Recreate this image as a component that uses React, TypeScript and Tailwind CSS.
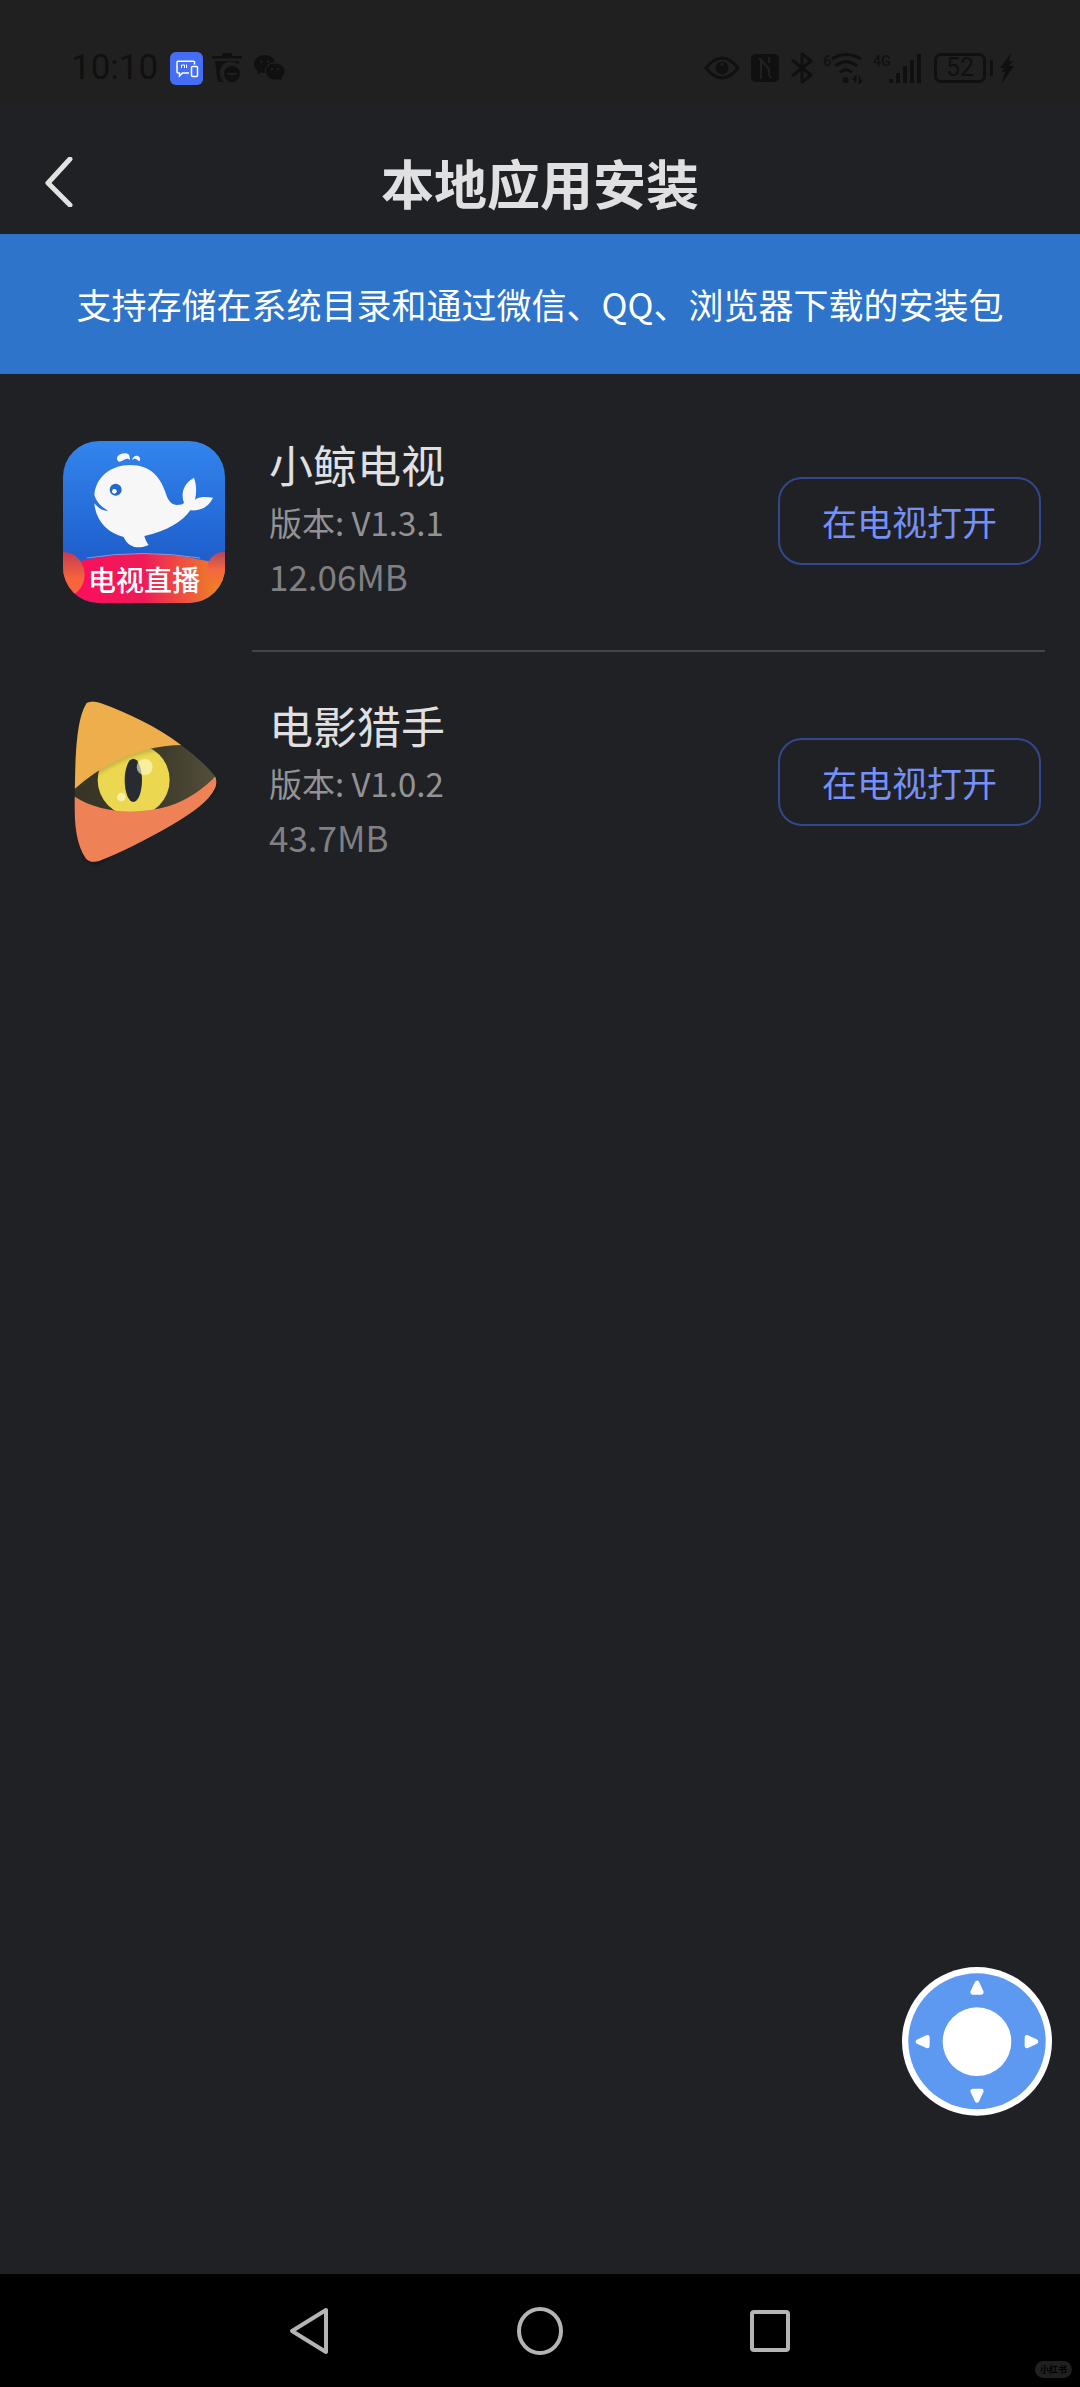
import React from "react";

function WhaleIcon() {
  return (
    <div className="relative size-[162px] overflow-hidden rounded-[36px]">
      <svg viewBox="39 33 486 486" className="size-full" aria-hidden="true">
        <defs>
          <linearGradient id="sea" x1="0" y1="0" x2="0" y2="1">
            <stop offset="0" stopColor="#3385ee" />
            <stop offset="0.7" stopColor="#1f60cd" />
          </linearGradient>
          <linearGradient id="ribbon" x1="0" y1="0" x2="1" y2="0">
            <stop offset="0.1" stopColor="#fb0f5c" />
            <stop offset="0.5" stopColor="#ee1b58" />
            <stop offset="1" stopColor="#ef8a22" />
          </linearGradient>
          <linearGradient id="leftDot" x1="0" y1="0" x2="0" y2="1">
            <stop offset="0" stopColor="#c73a55" />
            <stop offset="0.6" stopColor="#f8653a" />
          </linearGradient>
          <linearGradient id="rightDot" x1="0" y1="0" x2="0" y2="1">
            <stop offset="0" stopColor="#b04660" />
            <stop offset="0.5" stopColor="#f4673f" />
            <stop offset="1" stopColor="#f07a2c" />
          </linearGradient>
        </defs>
        <rect x="39" y="33" width="486" height="486" fill="url(#sea)" />
        <path
          fill="#f7f7f8"
          d="M133 195C137 142 182 105 240 105C303 105 331 143 345 184C353 208 360 223 380 225C392 225 399 223 402 219C391 190 401 160 432 143C440 167 440 187 435 209C452 198 472 201 489 203C475 232 449 244 421 241C399 274 349 304 283 318C286 329 290 338 296 345C262 360 233 350 221 321C173 309 137 272 133 220C146 235 158 243 175 242C159 234 140 219 133 195Z"
        />
        <circle cx="197" cy="179" r="18" fill="#2469c9" />
        <circle cx="193" cy="184" r="7" fill="#fff" />
        <path fill="#f7f7f8" d="M202 91C197 76 214 67 229 70C240 73 239 82 240 91C229 77 215 98 207 95ZM245 91C249 77 261 73 268 81C272 87 271 93 267 94C259 85 253 84 245 91Z" />
        <path d="M39 407Q280 335 525 407V519H39Z" fill="url(#ribbon)" />
        <path d="M110 384Q280 357 450 384" fill="none" stroke="#b9b4dc" strokeWidth="2" />
        <ellipse cx="40" cy="434" rx="64" ry="68" fill="url(#leftDot)" />
        <circle cx="524" cy="418" r="53" fill="url(#rightDot)" />
      </svg>
      <span className="absolute inset-x-0 bottom-1 text-center text-[28px] leading-[40px] font-medium text-white">电视直播</span>
    </div>
  );
}

function EyeIcon() {
  return (
    <svg viewBox="9 20 486 510" className="h-[170px] w-[162px]" aria-hidden="true">
      <defs>
        <clipPath id="play">
          <path d="M80 38Q96 29 121 38C208 69 292 111 362 163Q423 207 464 256Q474 270 465 294C446 333 400 366 334 405C252 452 180 488 117 512Q91 519 78 505C38 448 43 354 45 270C47 174 52 82 80 38Z" />
        </clipPath>
        <linearGradient id="lid" x1="0" y1="0" x2="1" y2="0">
          <stop offset="0" stopColor="#373426" />
          <stop offset="0.6" stopColor="#3f3c2c" />
          <stop offset="1" stopColor="#57523d" />
        </linearGradient>
        <filter id="soft" x="-20%" y="-20%" width="140%" height="140%">
          <feGaussianBlur stdDeviation="7" />
        </filter>
      </defs>
      <path fill="#08090b" opacity="0.55" filter="url(#soft)" d="M110 60L465 270L465 300L110 522L70 500Z" />
      <g clipPath="url(#play)">
        <rect x="30" y="20" width="460" height="510" fill="url(#lid)" />
        <circle cx="221" cy="269" r="108" fill="#ecd850" />
        <ellipse cx="220" cy="270" rx="26" ry="65" fill="#272c31" />
        <circle cx="254" cy="230" r="24" fill="#fffbd2" opacity="0.62" />
        <circle cx="184" cy="320" r="13" fill="#fffbd2" opacity="0.7" />
        <path d="M30 310Q190 163 370 168" fill="none" stroke="#423e26" strokeWidth="10" opacity="0.35" filter="url(#soft)" />
        <path d="M20 10H380V164Q190 160 30 308Z" fill="#eeae4c" />
        <path d="M30 309C110 369 230 375 325 348Q414 318 480 243V540H30Z" fill="#ee8256" />
      </g>
    </svg>
  );
}

const apps = [
  { name: "小鲸电视", version: "V1.3.1", size: "12.06MB", icon: <WhaleIcon /> },
  { name: "电影猎手", version: "V1.0.2", size: "43.7MB", icon: <EyeIcon /> },
];

function StatusBar() {
  return (
    <div className="flex h-[106px] items-center justify-between bg-[#202020] pt-[34px] pr-[66px] pb-[4px] pl-[71px] text-[#101010]">
      <div className="flex items-center">
        <span className="w-[99px] font-[Roboto] text-[35px] leading-[40px]">10:10</span>
        <svg viewBox="0 0 33 33" className="size-[33px]" fill="none" stroke="#fff" strokeWidth="1.5" aria-hidden="true">
          <rect width="33" height="33" rx="6" fill="#456ef5" stroke="none" />
          <path d="M24.500 12.500V10Q24.500 9.200 23.500 9.200H8Q7 9.200 7 10.200V20Q7 21 8 21H9.500V24L12.500 21H19" />
          <path d="M11.500 16V13H14.500V16M16.500 12.500V16" strokeWidth="1" />
          <rect x="21.500" y="14.500" width="6" height="10" rx="1" />
        </svg>
        <svg viewBox="0 0 31 31" className="ml-[9px] h-[31px] w-[31px]" fill="#101010" aria-hidden="true">
          <path d="M0 3H10V1Q10 0 11 0H19Q20 0 20 1V3H30V5.500H0ZM3 8H27L26.500 11A10 10 0 0 0 12 29H8Q6 29 5.500 27Z" />
          <circle cx="20" cy="21" r="8" />
          <path d="M15.500 21H24.500" stroke="#202020" strokeWidth="2" />
        </svg>
        <svg viewBox="0 0 31 26" className="ml-[11px] h-[26px] w-[31px]" fill="#101010" aria-hidden="true">
          <path d="M11 0C5 0 0 4 0 9C0 12 2 15 4 16L3 19.500L7 17.500Q9 18 11 18C10 11 15 7 21 7C20 3 16 0 11 0Z" />
          <path d="M21 8.500C15.500 8.500 12 12 12 16.500C12 21 16 24.500 21 24.500Q23 24.500 25 24L28 25.500L27.500 22.500C29 21 30.500 19 30.500 16.500C30.500 12 26.500 8.500 21 8.500Z" />
          <g fill="#202020">
            <circle cx="7.500" cy="6.500" r="1.300" />
            <circle cx="14" cy="6.500" r="1.300" />
            <circle cx="18" cy="14" r="1.200" />
            <circle cx="24" cy="14" r="1.200" />
          </g>
        </svg>
      </div>
      <div className="flex items-center">
        <svg viewBox="0 0 36 24" className="h-[24px] w-[36px]" fill="none" stroke="#101010" strokeWidth="3" aria-hidden="true">
          <path d="M2 12Q18-8 34 12Q18 32 2 12Z" />
          <circle cx="18" cy="12" r="6.500" fill="#101010" stroke="none" />
          <circle cx="18" cy="8.500" r="1.700" fill="#202020" stroke="none" />
        </svg>
        <svg viewBox="0 0 28 28" className="ml-[11px] size-[28px]" fill="none" aria-hidden="true">
          <rect width="28" height="28" rx="5" fill="#101010" />
          <path d="M10 25V6L18 15V21M10 6L8 4M18 3V9M18 21L20 24" stroke="#202020" strokeWidth="2" />
          <path d="M5 5V23M23 5V23" stroke="#101010" strokeWidth="2" />
        </svg>
        <svg viewBox="0 0 22 32" className="ml-[12px] h-[32px] w-[22px]" fill="none" stroke="#101010" strokeWidth="3" strokeLinejoin="round" aria-hidden="true">
          <path d="M1 8L20 23L11 30V2L20 9L1 24" />
        </svg>
        <div className="ml-[10px] flex">
          <span className="w-[8px] font-[Roboto] text-[15px] leading-[16px] font-medium">6</span>
          <svg viewBox="0 0 33 31" className="h-[31px] w-[33px]" fill="none" stroke="#101010" strokeWidth="3" aria-hidden="true">
            <path d="M1 6Q15-3 30 6M4.500 13Q15 4.500 26 13M9 19.500Q15 14 21 19.500" />
            <circle cx="14.500" cy="27" r="3" fill="#101010" stroke="none" />
            <path d="M24.500 30V24L22 27M28.500 23V30L31 27" strokeWidth="2" />
          </svg>
        </div>
        <div className="ml-[9px] flex">
          <span className="-mr-[1px] w-[17px] font-[Roboto] text-[14px] leading-[16px] font-medium">4G</span>
          <svg viewBox="0 0 33 31" className="h-[31px] w-[33px]" stroke="#101010" strokeWidth="4" aria-hidden="true">
            <path d="M2 30V26M9 30V20M16 30V13M23 30V7M30 30V1" />
          </svg>
        </div>
        <div className="ml-[12px] flex h-[30px] w-[52px] items-center justify-center rounded-[7px] border-[3px] border-[#101010] font-[Roboto] text-[25px]">52</div>
        <div className="ml-[4px] h-[16px] w-[3px] bg-[#101010]" />
        <svg viewBox="0 0 14 30" className="ml-[7px] h-[30px] w-[14px]" fill="#101010" aria-hidden="true">
          <path d="M11 0L0 15H5L1 19H5L2 30L14 13H9L13 8H9Z" />
        </svg>
      </div>
    </div>
  );
}

export default function App() {
  return (
    <div className="relative flex min-h-screen flex-col bg-[#202125] font-['Noto_Sans_CJK_SC',sans-serif] text-[#e0e0e2]">
      <StatusBar />
      <header className="grid h-[128px] grid-cols-[1fr_auto_1fr] items-center pt-[24px]">
        <button aria-label="返回" className="flex h-[80px] w-[118px] items-center justify-center">
          <svg viewBox="0 0 28 50" className="h-[50px] w-[28px]" fill="none" stroke="#e2e2e2" strokeWidth="5" strokeLinecap="round" strokeLinejoin="round" aria-hidden="true">
            <path d="M25 3L3 27L25 49" transform="translate(0 -1)" />
          </svg>
        </button>
        <h1 className="text-[53px] leading-[80px] font-bold">本地应用安装</h1>
      </header>
      <p className="flex h-[140px] items-center justify-center bg-[#2d74ca] text-[35px] leading-[52px] whitespace-nowrap text-white">
        支持存储在系统目录和通过微信、QQ、浏览器下载的安装包
      </p>
      <ul className="pt-[18px]">
        {apps.map((app, i) => (
          <li key={app.name} className="flex h-[260px] pl-[63px]">
            <div className="flex w-[162px] shrink-0 items-center">{app.icon}</div>
            <div className={`mr-[35px] ml-[27px] flex flex-1 items-center pr-[4px] pl-[17px] ${i < apps.length - 1 ? "border-b-2 border-[#434447]" : ""}`}>
              <div className="flex-1 pb-[6px]">
                <h2 className="text-[44px] leading-[62px]">{app.name}</h2>
                <p className="text-[33px] leading-[54px] text-[#939395]">版本: {app.version}</p>
                <p className="text-[35px] leading-[54px] text-[#808083]">{app.size}</p>
              </div>
              <button className="h-[88px] w-[263px] rounded-[24px] border-2 border-[#33488c] text-[35px] text-[#7590f6]">在电视打开</button>
            </div>
          </li>
        ))}
      </ul>
      <button aria-label="遥控器" className="absolute right-[28px] bottom-[271px]">
        <svg viewBox="36 49 450 447" className="h-[149px] w-[150px]" aria-hidden="true">
          <ellipse cx="261" cy="272" rx="225" ry="223" fill="#fff" />
          <ellipse cx="261" cy="272" rx="206" ry="204" fill="#5d98f1" />
          <circle cx="261" cy="273" r="103" fill="#fff" />
          <g fill="#fff" stroke="#fff" strokeWidth="14" strokeLinejoin="round">
            <path d="M261 97L248 125H274Z" />
            <path d="M261 449L248 421H274Z" />
            <path d="M84 273L112 260V286Z" />
            <path d="M438 273L411 260V286Z" />
          </g>
        </svg>
      </button>
      <nav className="relative mt-auto flex h-[113px] items-center justify-center bg-black">
        <button aria-label="后退" className="flex h-full w-[230px] items-center justify-center">
          <svg viewBox="0 0 44 50" className="h-[50px] w-[44px]" fill="none" stroke="#b4b4b4" strokeWidth="4" strokeLinejoin="round" aria-hidden="true">
            <path d="M38 4L4 25L38 46Z" />
          </svg>
        </button>
        <button aria-label="主页" className="flex h-full w-[230px] items-center justify-center">
          <svg viewBox="0 0 46 48" className="h-[48px] w-[46px]" fill="none" stroke="#b4b4b4" strokeWidth="4" aria-hidden="true">
            <ellipse cx="23" cy="24" rx="21" ry="22" />
          </svg>
        </button>
        <button aria-label="最近任务" className="flex h-full w-[230px] items-center justify-center">
          <svg viewBox="0 0 42 42" className="size-[42px]" fill="none" stroke="#b4b4b4" strokeWidth="4" strokeLinejoin="round" aria-hidden="true">
            <rect x="3" y="2" width="36" height="38" rx="2" />
          </svg>
        </button>
        <span className="absolute right-[8px] bottom-[9px] h-[17px] w-[37px] rounded-full bg-[#202020] text-center text-[9px] leading-[17px] font-bold text-black">小红书</span>
      </nav>
    </div>
  );
}
